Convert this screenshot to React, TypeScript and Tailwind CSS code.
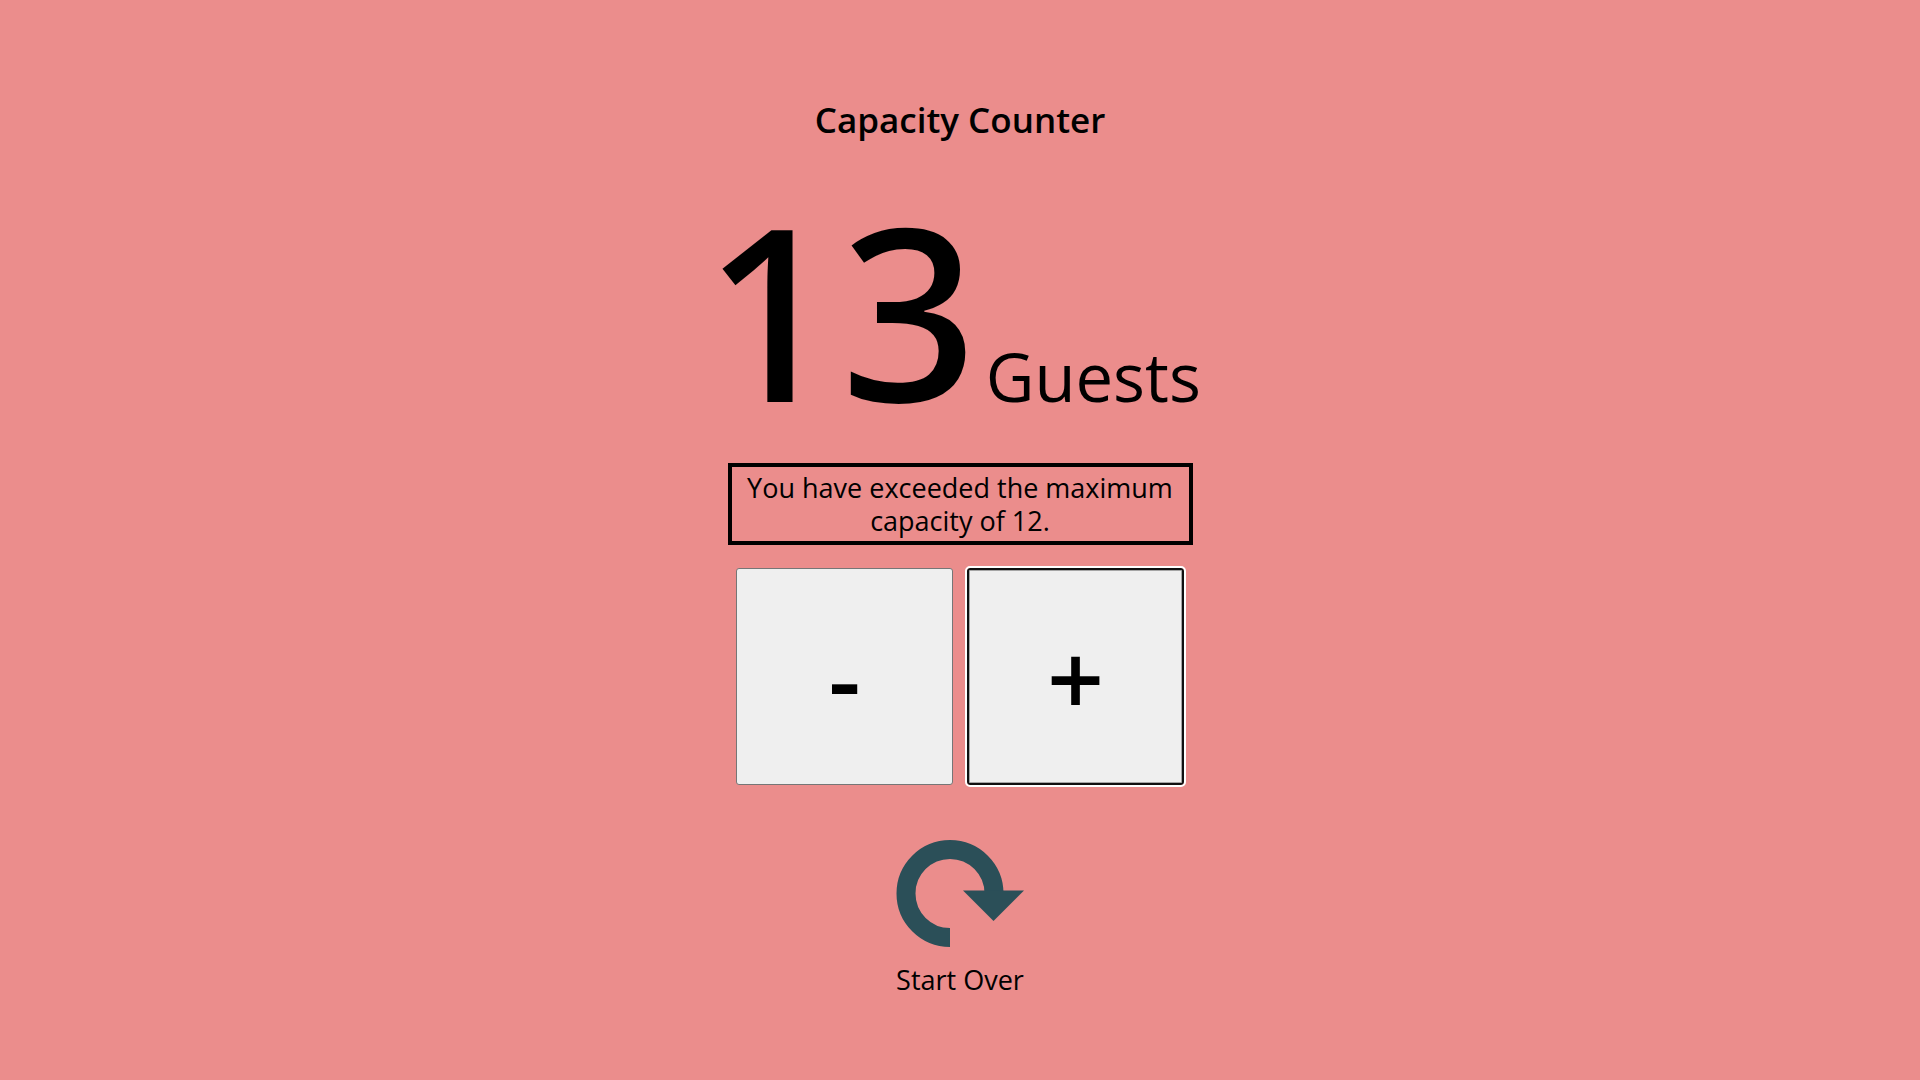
import { useState } from "react";

const MAX_CAPACITY = 12;

export default function App() {
  const [guests, setGuests] = useState(13);
  const exceeded = guests > MAX_CAPACITY;

  return (
    <main
      className={`flex min-h-screen flex-col items-center pt-24 font-['Trebuchet_MS','Open_Sans',sans-serif] text-black ${
        exceeded ? "bg-[#eb8d8c]" : "bg-white"
      }`}
    >
      <h1 className="text-[35px] leading-12 font-semibold">Capacity Counter</h1>

      <p className="mt-9 flex items-baseline gap-2 pr-4 whitespace-nowrap">
        <output className="font-['Trebuchet_MS','Noto_Sans',sans-serif] text-[240px] leading-[258px] font-medium">
          {guests}
        </output>
        <span className="text-[67px] leading-20">Guests</span>
      </p>

      {exceeded && (
        <p className="mt-[25px] w-full max-w-[465px] border-4 border-black p-1 text-center text-[27px] leading-[33px]">
          You have exceeded the maximum capacity of {MAX_CAPACITY}.
        </p>
      )}

      <div className="mt-[23px] flex gap-[14px]">
        <button
          type="button"
          aria-label="Remove guest"
          onClick={() => setGuests(Math.max(0, guests - 1))}
          className="size-[217px] rounded-[3px] border border-[#767676] bg-[#efefef] text-[100px] leading-none font-semibold"
        >
          -
        </button>
        <button
          type="button"
          aria-label="Add guest"
          onClick={() => setGuests(guests + 1)}
          className="size-[217px] rounded-[3px] border-2 border-[#101010] bg-[#efefef] text-[100px] leading-none font-semibold inset-ring inset-ring-[#a5a5a5] outline-2 outline-white"
        >
          +
        </button>
      </div>

      <button
        type="button"
        onClick={() => setGuests(0)}
        className="mt-[55px] flex flex-col items-center gap-[15px] text-[27px] leading-9"
      >
        <svg viewBox="0 0 128 107" className="h-[107px] w-32" aria-hidden="true">
          <path d="M54 97.5A44 44 0 1 1 98 53.5V50.5" fill="none" stroke="#2b4f58" strokeWidth="19" />
          <path d="M67 50.5H128L97.5 81Z" fill="#2b4f58" />
        </svg>
        Start Over
      </button>
    </main>
  );
}
